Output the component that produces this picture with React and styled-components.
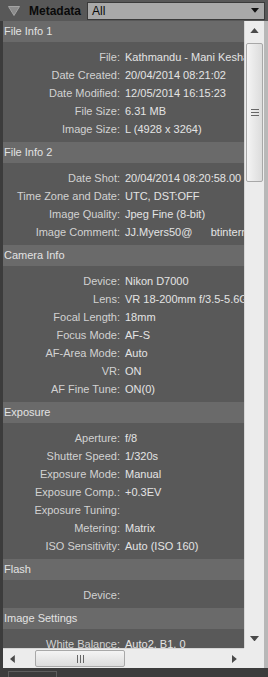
import React from 'react';
import styled, { createGlobalStyle } from 'styled-components';

const GlobalStyle = createGlobalStyle`
  html, body {
    margin: 0;
    padding: 0;
    background: #3a3a3a;
  }
  body {
    font-family: "Liberation Sans", Arial, sans-serif;
    font-size: 11px;
  }
`;

const sections = [
  {
    title: 'File Info 1',
    rows: [
      ['File', 'Kathmandu - Mani Keshar Chowk.NEF'],
      ['Date Created', '20/04/2014 08:21:02'],
      ['Date Modified', '12/05/2014 16:15:23'],
      ['File Size', '6.31 MB'],
      ['Image Size', 'L (4928 x 3264)'],
    ],
  },
  {
    title: 'File Info 2',
    rows: [
      ['Date Shot', '20/04/2014 08:20:58.00'],
      ['Time Zone and Date', 'UTC, DST:OFF'],
      ['Image Quality', 'Jpeg Fine (8-bit)'],
      ['Image Comment', 'JJ.Myers50@\u00a0\u00a0\u00a0\u00a0\u00a0\u00a0btinternet.com'],
    ],
  },
  {
    title: 'Camera Info',
    rows: [
      ['Device', 'Nikon D7000'],
      ['Lens', 'VR 18-200mm f/3.5-5.6G'],
      ['Focal Length', '18mm'],
      ['Focus Mode', 'AF-S'],
      ['AF-Area Mode', 'Auto'],
      ['VR', 'ON'],
      ['AF Fine Tune', 'ON(0)'],
    ],
  },
  {
    title: 'Exposure',
    rows: [
      ['Aperture', 'f/8'],
      ['Shutter Speed', '1/320s'],
      ['Exposure Mode', 'Manual'],
      ['Exposure Comp.', '+0.3EV'],
      ['Exposure Tuning', ''],
      ['Metering', 'Matrix'],
      ['ISO Sensitivity', 'Auto (ISO 160)'],
    ],
  },
  {
    title: 'Flash',
    rows: [['Device', '']],
  },
  {
    title: 'Image Settings',
    rows: [['White Balance', 'Auto2, B1, 0']],
  },
];

const Window = styled.div`
  width: 268px;
  height: 677px;
  overflow: hidden;
  display: flex;
  flex-direction: column;
  background: #5a5a5a;
`;

const TopBar = styled.div`
  height: 21px;
  display: flex;
  align-items: center;
  background: #585858;
  padding-left: 8px;
  box-sizing: border-box;
`;

const Title = styled.div`
  margin-left: 9px;
  font-weight: bold;
  font-size: 12px;
  color: #0a0a0a;
  width: 57px;
`;

const Select = styled.div`
  margin-left: 1px;
  width: 178px;
  height: 18px;
  box-sizing: border-box;
  background: #a9a9a9;
  border: 1px solid #3a3a3a;
  display: flex;
  align-items: center;
  justify-content: space-between;
  padding: 0 5px 0 4px;
  font-size: 12px;
  color: #0c0c0c;
`;

const Body = styled.div`
  display: grid;
  grid-template-columns: 241px 20px;
  grid-template-rows: 627px 20px;
  border-left: 3px solid #3c3c3c;
  background: #b8b8b8;
  padding-right: 4px;
  width: 268px;
  box-sizing: border-box;
`;

const Content = styled.div`
  overflow: hidden;
  background: #595959;
`;

const SectionHeader = styled.div`
  height: 21px;
  line-height: 21px;
  background: #6a6a6a;
  color: #e2e2e2;
  padding-left: 1px;
  white-space: nowrap;
`;

const Rows = styled.div`
  padding: 6px 0 4px;
`;

const Row = styled.div`
  height: 18px;
  display: flex;
  align-items: center;
  white-space: nowrap;
  color: #dadada;
`;

const Label = styled.div`
  width: 117px;
  flex: none;
  text-align: right;
  color: #d2d2d2;
`;

const Value = styled.div`
  margin-left: 5px;
  white-space: pre;
  color: #e4e4e4;
`;

const VTrack = styled.div`
  background: #ececec;
  border-left: 1px solid #d6d6d6;
  display: flex;
  flex-direction: column;
  align-items: center;
`;

const HTrack = styled.div`
  background: #ececec;
  border-top: 1px solid #d6d6d6;
  display: flex;
  align-items: center;
`;

const Corner = styled.div`
  background: #ececec;
`;

const ArrowBtn = styled.div`
  width: 19px;
  height: 19px;
  flex: none;
  display: flex;
  align-items: center;
  justify-content: center;
`;

const Thumb = styled.div`
  box-sizing: border-box;
  border: 1px solid #a8a8a8;
  border-radius: 2px;
  background: ${p => p.$horizontal
    ? 'linear-gradient(#f4f4f4, #dcdcdc)'
    : 'linear-gradient(90deg, #f4f4f4, #dcdcdc)'};
  display: flex;
  align-items: center;
  justify-content: center;
  flex: none;
`;

const Spacer = styled.div`
  flex: 1;
`;

const Footer = styled.div`
  height: 9px;
  background: #3c3c3c;
  padding-left: 8px;
  padding-top: 3px;
  box-sizing: border-box;
`;

const FooterBox = styled.div`
  width: 49px;
  height: 10px;
  border: 1px solid #5e5e5e;
  border-bottom: none;
  box-sizing: border-box;
`;

const Tri = ({ dir, color = '#4a4a4a', size = 7 }) => {
  const pts = {
    up: `0,${size * 0.6} ${size},${size * 0.6} ${size / 2},0`,
    down: `0,0 ${size},0 ${size / 2},${size * 0.6}`,
    left: `${size * 0.6},0 ${size * 0.6},${size} 0,${size / 2}`,
    right: `0,0 0,${size} ${size * 0.6},${size / 2}`,
  }[dir];
  const horiz = dir === 'left' || dir === 'right';
  return (
    <svg width={horiz ? size * 0.6 : size} height={horiz ? size : size * 0.6}>
      <polygon points={pts} fill={color} />
    </svg>
  );
};

const Grip = ({ horizontal }) => (
  <svg width={horizontal ? 9 : 8} height={horizontal ? 8 : 9}>
    {[0, 3, 6].map(o => horizontal
      ? <rect key={o} x={o + 1} y={0} width={1} height={8} fill="#666" />
      : <rect key={o} x={0} y={o + 1} width={8} height={1} fill="#666" />)}
  </svg>
);

export default function App() {
  return (
    <Window>
      <GlobalStyle />
      <TopBar>
        <svg width="12" height="10">
          <polygon points="0.5,0.5 11.5,0.5 6,9.5" fill="#8c8c8c" stroke="#a4a4a4" />
        </svg>
        <Title>Metadata</Title>
        <Select>
          <span>All</span>
          <Tri dir="down" color="#111" size={8} />
        </Select>
      </TopBar>
      <Body>
        <Content>
          {sections.map(sec => (
            <div key={sec.title}>
              <SectionHeader>{sec.title}</SectionHeader>
              <Rows>
                {sec.rows.map(([label, value]) => (
                  <Row key={label}>
                    <Label>{label}:</Label>
                    <Value>{value}</Value>
                  </Row>
                ))}
              </Rows>
            </div>
          ))}
        </Content>
        <VTrack>
          <ArrowBtn><Tri dir="up" size={9} /></ArrowBtn>
          <Thumb style={{ width: 17, height: 139, marginTop: 3 }}>
            <Grip />
          </Thumb>
          <Spacer />
          <ArrowBtn><Tri dir="down" size={9} /></ArrowBtn>
        </VTrack>
        <HTrack>
          <ArrowBtn><Tri dir="left" size={8} /></ArrowBtn>
          <Thumb $horizontal style={{ width: 90, height: 17, marginLeft: 13 }}>
            <Grip horizontal />
          </Thumb>
          <Spacer />
          <ArrowBtn><Tri dir="right" size={8} /></ArrowBtn>
        </HTrack>
        <Corner />
      </Body>
      <Footer>
        <FooterBox />
      </Footer>
    </Window>
  );
}
